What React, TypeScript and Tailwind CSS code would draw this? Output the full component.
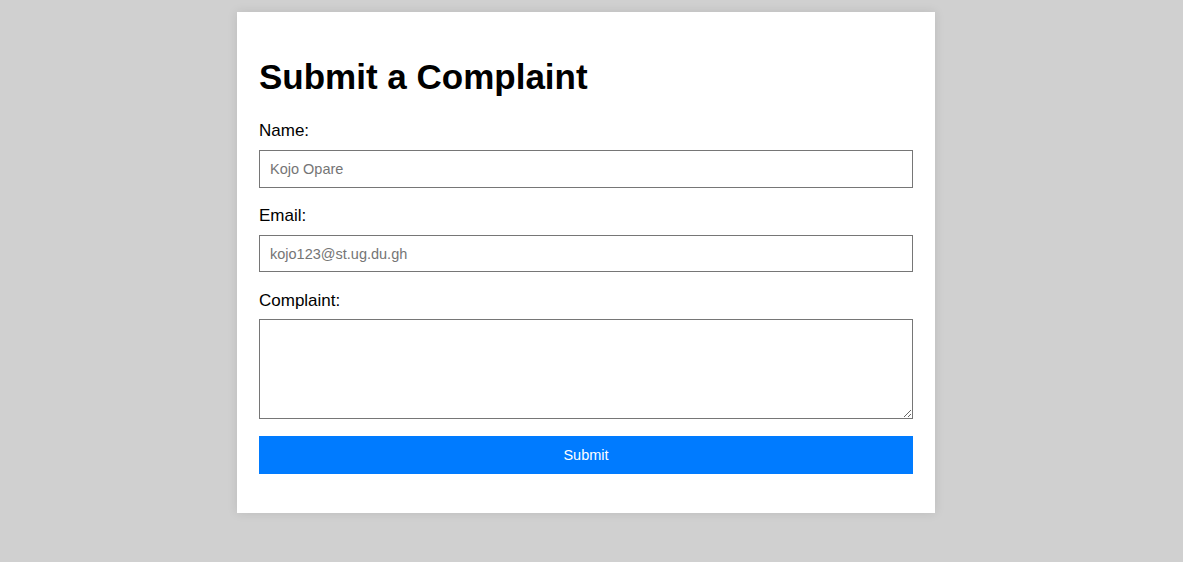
export default function App() {
  return (
    <div
      className="min-h-screen bg-[#d0d0d0] flex justify-center pt-[12px] pr-[11px]"
      style={{ fontFamily: '"Liberation Sans", Arial, sans-serif' }}
    >
      <div className="w-[698px] h-[501px] bg-white p-[22px] shadow-[0_0_10px_rgba(0,0,0,0.1)]">
        <h1 className="text-[35px] font-bold text-black leading-[40px] mt-[23px] mb-[24px]">
          Submit a Complaint
        </h1>

        <form className="flex flex-col" onSubmit={(e) => e.preventDefault()}>
          <label className="block text-[17px] leading-[20px] text-black mb-[9px]">Name:</label>
          <input
            placeholder="Kojo Opare"
            className="w-full h-[38px] border border-[#767676] px-[10px] text-[14.5px] placeholder:text-[#757575] mb-[18px] outline-none"
          />

          <label className="block text-[17px] leading-[20px] text-black mb-[9px]">Email:</label>
          <input
            placeholder="kojo123@st.ug.du.gh"
            className="w-full h-[37px] border border-[#767676] px-[10px] text-[14.5px] placeholder:text-[#757575] mb-[19px] outline-none"
          />

          <label className="block text-[17px] leading-[20px] text-black mb-[8px]">Complaint:</label>
          <textarea className="w-full h-[100px] border border-[#767676] p-[10px] text-[14.5px] mb-[17px] outline-none" />

          <button
            type="submit"
            className="w-full h-[38px] bg-[#007bff] text-white text-[14.5px] leading-[39px]"
          >
            Submit
          </button>
        </form>
      </div>
    </div>
  );
}
